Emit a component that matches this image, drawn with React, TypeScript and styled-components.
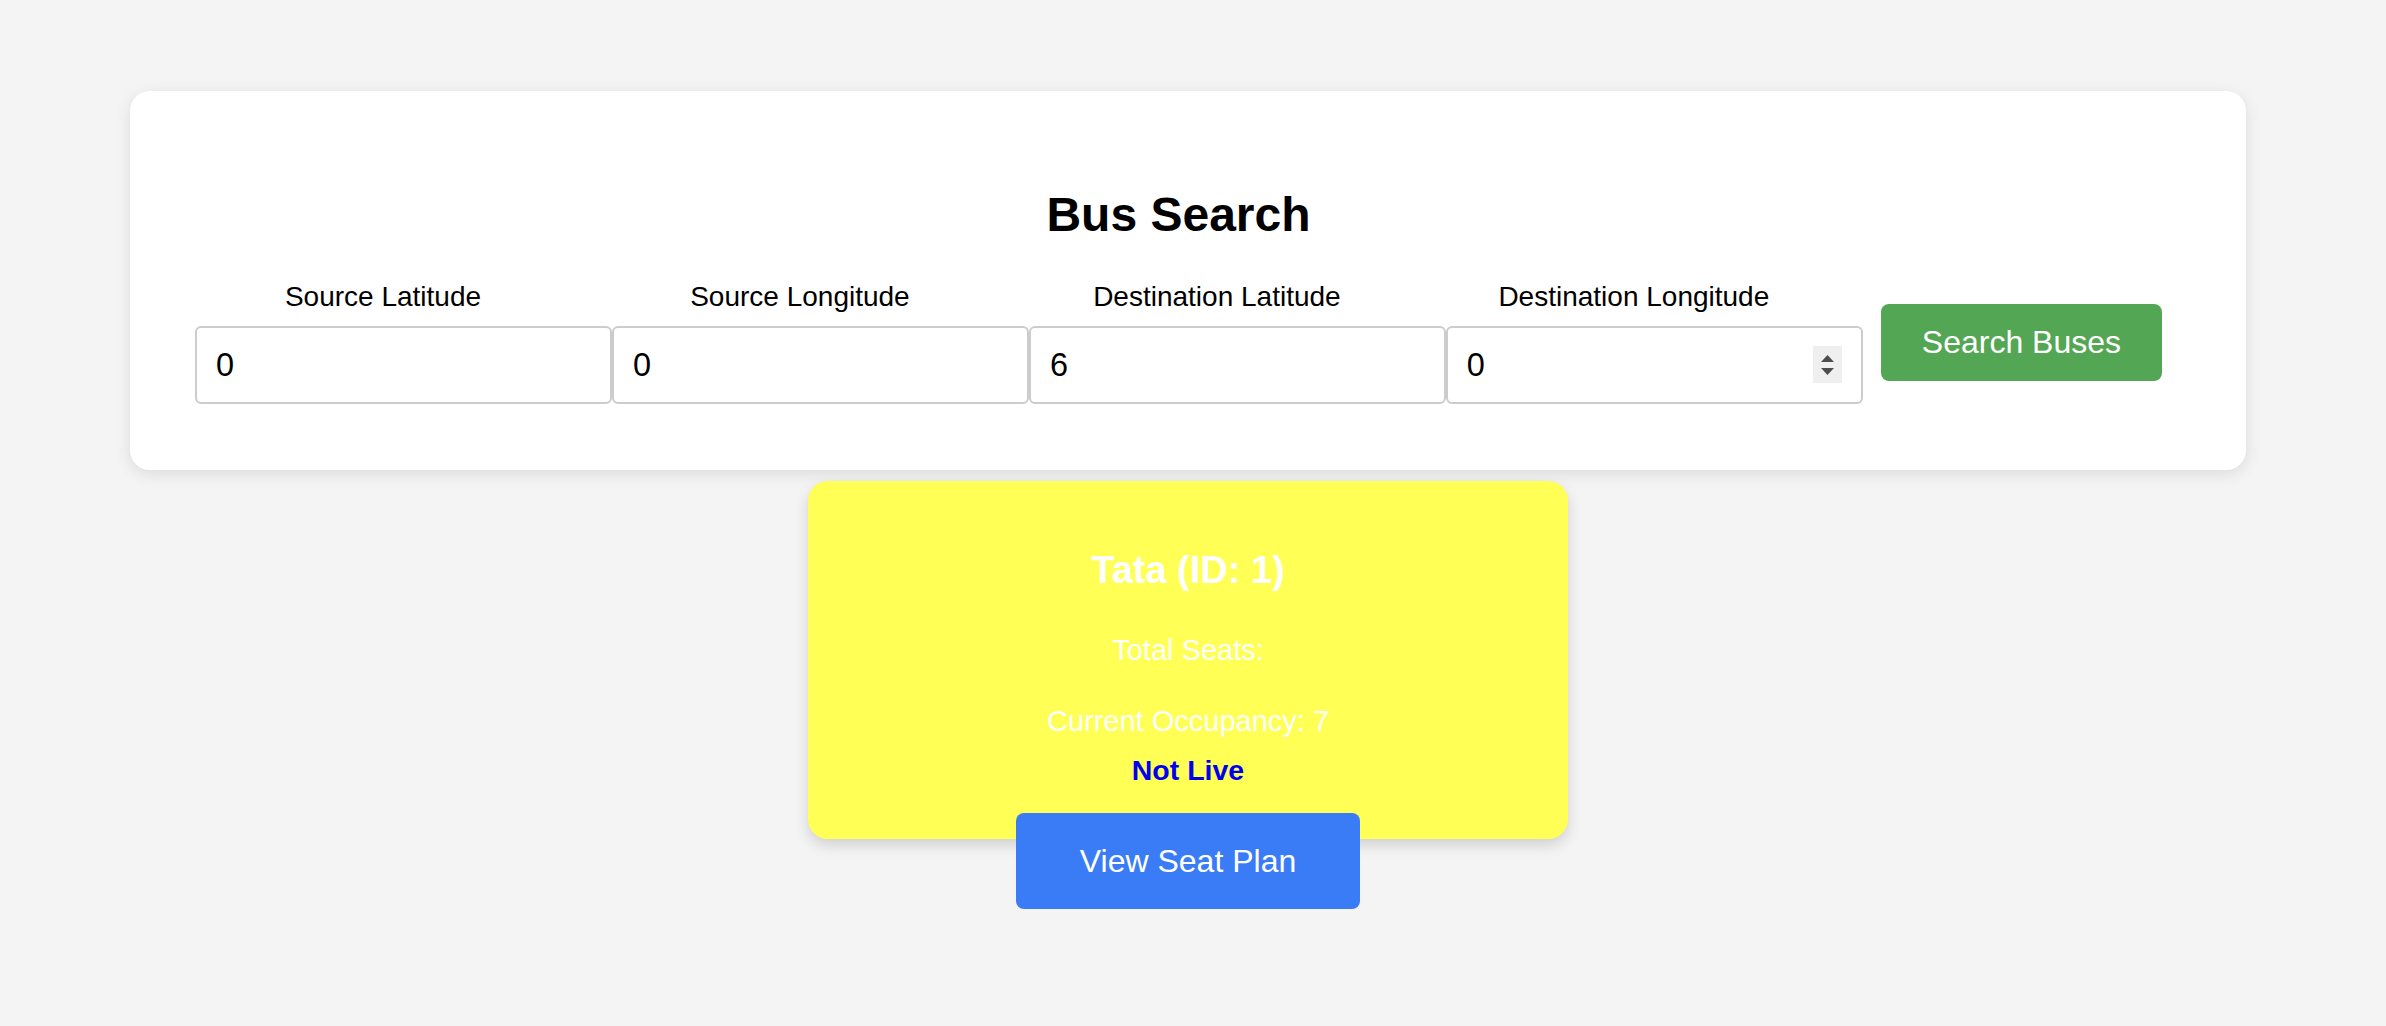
import React from "react";
import styled, { createGlobalStyle } from "styled-components";

const GlobalStyle = createGlobalStyle`
  html, body {
    margin: 0;
    padding: 0;
    background: #f4f4f4;
    font-family: "Liberation Sans", Arial, sans-serif;
  }
  * { box-sizing: border-box; }
`;

const Page = styled.div`
  width: 2376px;
  min-height: 100vh;
  padding-top: 91px;
  display: flex;
  flex-direction: column;
  align-items: center;
`;

const SearchCard = styled.section`
  width: 2116px;
  background: #ffffff;
  border-radius: 20px;
  box-shadow: 0 4px 16px rgba(0, 0, 0, 0.1);
  padding: 96px 84px 66px 65px;
`;

const Heading = styled.h1`
  margin: 0 0 39px;
  font-size: 48px;
  font-weight: 700;
  line-height: normal;
  text-align: center;
  color: #000;
`;

const Form = styled.form`
  display: flex;
  align-items: center;
`;

const FieldGroup = styled.div`
  flex: 1 1 0;
  min-width: 0;
  display: flex;
  flex-direction: column;
  align-items: center;
`;

const Label = styled.label`
  font-size: 28px;
  line-height: normal;
  color: #000;
  margin: 0 41px 13px 0;
`;

const InputWrap = styled.div`
  position: relative;
  width: 100%;
`;

const NumberInput = styled.input`
  display: block;
  width: 100%;
  height: 78px;
  border: 2px solid #cccccc;
  border-radius: 6px;
  padding: 0 19px;
  font-family: "Liberation Sans", Arial, sans-serif;
  font-size: 32.5px;
  color: #000;
  background: #fff;
  outline: none;
  -moz-appearance: textfield;
  &::-webkit-inner-spin-button,
  &::-webkit-outer-spin-button {
    -webkit-appearance: none;
    margin: 0;
  }
`;

const Spinner = styled.div`
  position: absolute;
  right: 21px;
  top: 20px;
  width: 29px;
  height: 37px;
  background: #efefef;
  display: flex;
  flex-direction: column;
  align-items: center;
  justify-content: center;
  gap: 6px;
`;

const SearchButton = styled.button`
  flex: 0 0 auto;
  margin-left: 18px;
  height: 77px;
  padding: 0 41px;
  border: none;
  border-radius: 8px;
  background: #53a653;
  color: #ffffff;
  font-family: "Liberation Sans", Arial, sans-serif;
  font-size: 32px;
  cursor: pointer;
`;

const BusCard = styled.article`
  margin-top: 11px;
  width: 760px;
  height: 358px;
  padding-top: 68px;
  background: #ffff55;
  border-radius: 20px;
  box-shadow: 0 6px 14px rgba(0, 0, 0, 0.15);
  text-align: center;
  color: #ffffff;
`;

const BusTitle = styled.h3`
  margin: 0 0 42px;
  font-size: 38px;
  font-weight: 700;
  line-height: normal;
`;

const Info = styled.p<{ $gap: number }>`
  margin: 0 0 ${(p) => p.$gap}px;
  font-size: 29px;
  line-height: normal;
`;

const Status = styled.div`
  margin: 0 0 26px;
  font-size: 28.5px;
  font-weight: 700;
  line-height: normal;
  color: #0000ee;
`;

const ViewButton = styled.button`
  display: block;
  margin: 0 auto;
  width: 344px;
  height: 96px;
  border: none;
  border-radius: 8px;
  background: #3a7cf6;
  color: #ffffff;
  font-family: "Liberation Sans", Arial, sans-serif;
  font-size: 32px;
  cursor: pointer;
`;

const Arrow = ({ up }: { up?: boolean }) => (
  <svg width="13" height="7" viewBox="0 0 13 7">
    <polygon points={up ? "6.5,0 13,7 0,7" : "0,0 13,0 6.5,7"} fill="#4d4d4d" />
  </svg>
);

const fields = [
  { label: "Source Latitude", value: "0" },
  { label: "Source Longitude", value: "0" },
  { label: "Destination Latitude", value: "6" },
  { label: "Destination Longitude", value: "0", spinner: true },
];

export default function App() {
  return (
    <>
      <GlobalStyle />
      <Page>
        <SearchCard>
          <Heading>Bus Search</Heading>
          <Form onSubmit={(e) => e.preventDefault()}>
            {fields.map((f) => (
              <FieldGroup key={f.label}>
                <Label>{f.label}</Label>
                <InputWrap>
                  <NumberInput type="number" defaultValue={f.value} />
                  {f.spinner && (
                    <Spinner>
                      <Arrow up />
                      <Arrow />
                    </Spinner>
                  )}
                </InputWrap>
              </FieldGroup>
            ))}
            <SearchButton type="submit">Search Buses</SearchButton>
          </Form>
        </SearchCard>
        <BusCard>
          <BusTitle>Tata (ID: 1)</BusTitle>
          <Info $gap={38}>Total Seats: </Info>
          <Info $gap={16}>Current Occupancy: 7</Info>
          <Status>Not Live</Status>
          <ViewButton>View Seat Plan</ViewButton>
        </BusCard>
      </Page>
    </>
  );
}
